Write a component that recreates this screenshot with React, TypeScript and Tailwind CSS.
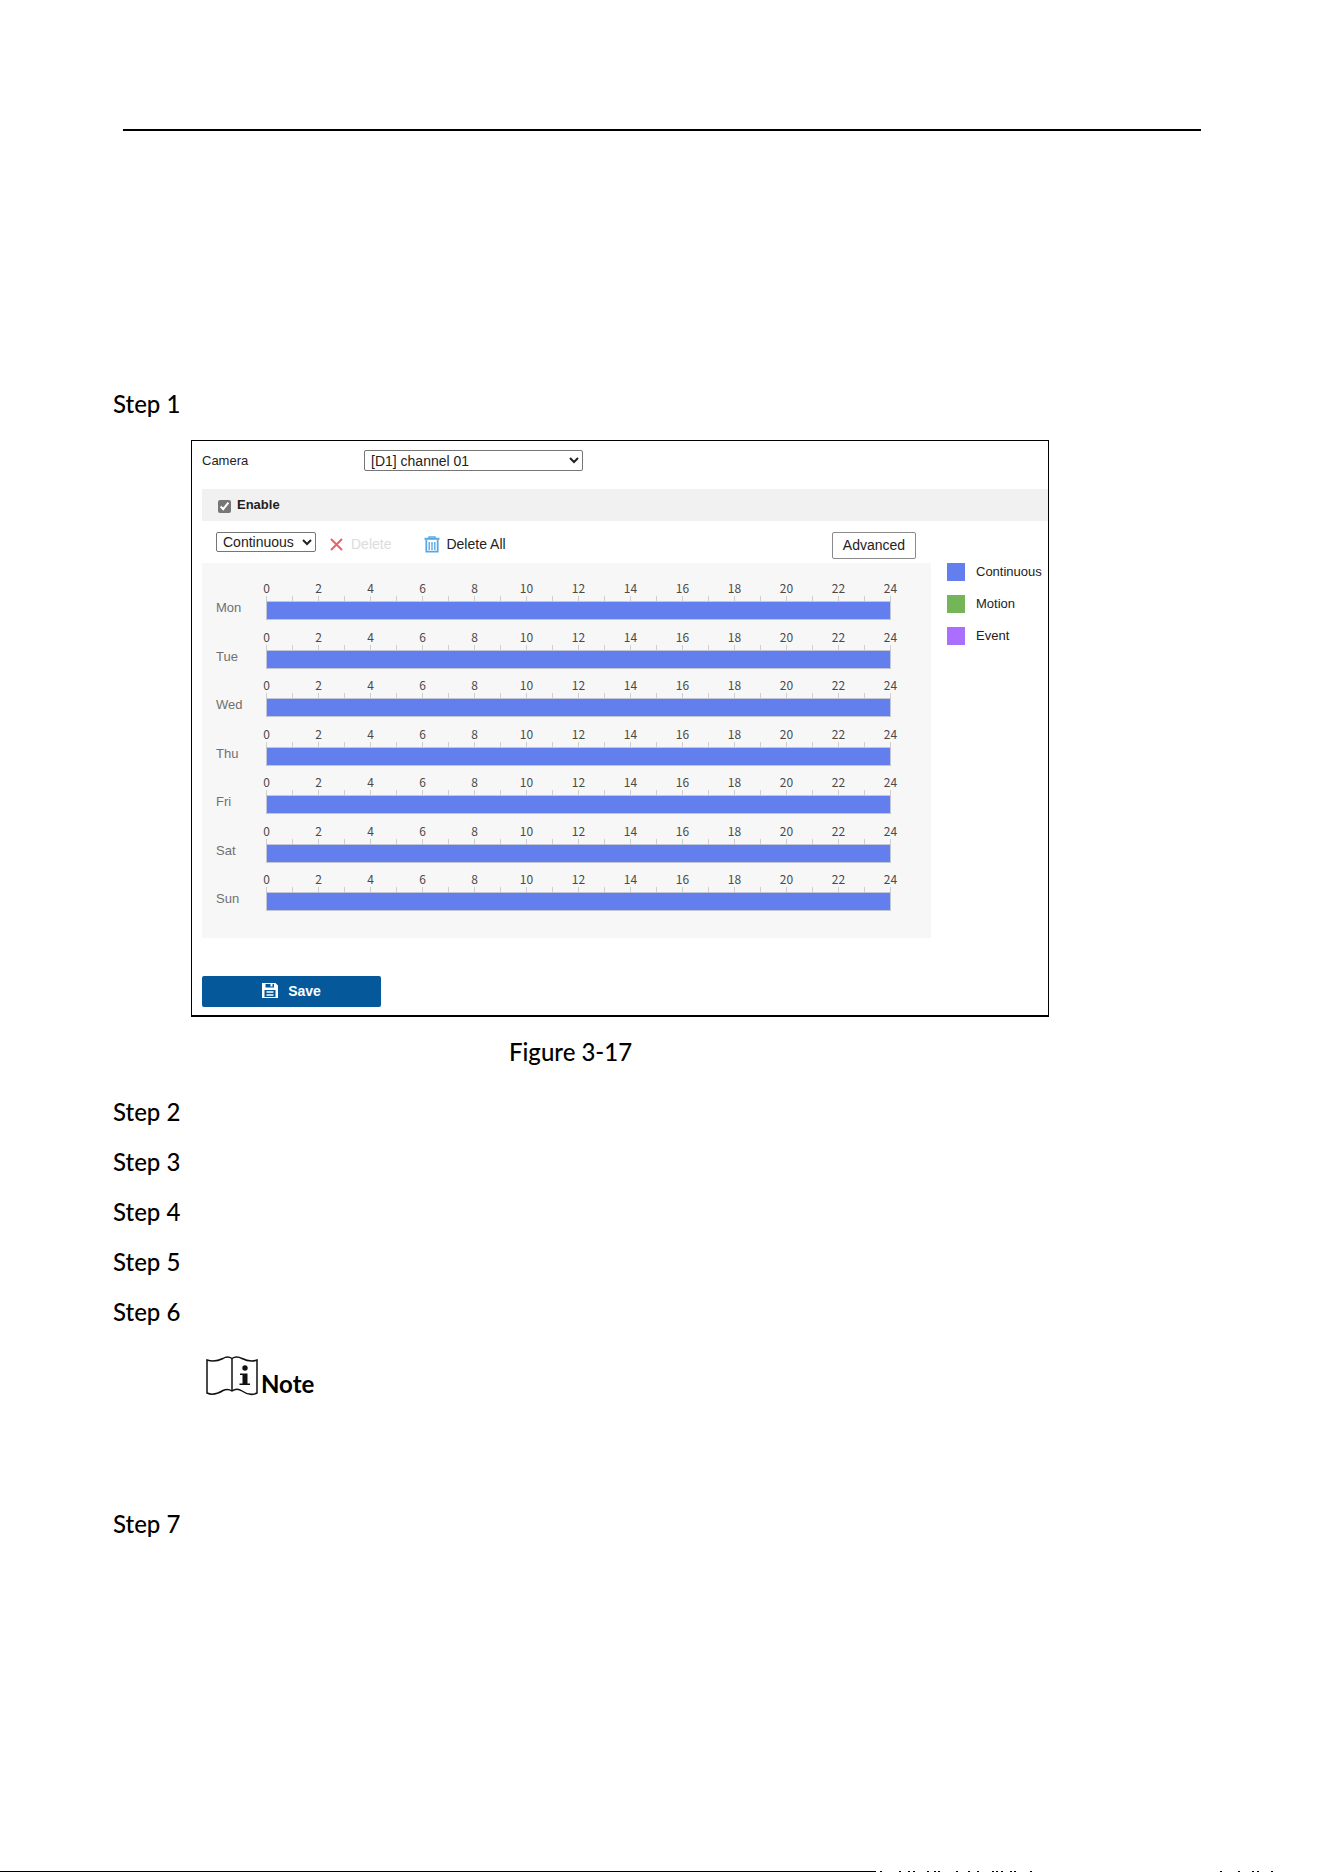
import React from "react";

const DAYS = ["Mon", "Tue", "Wed", "Thu", "Fri", "Sat", "Sun"];
const HOURS = Array.from({ length: 25 }, (_, i) => i);
const FOOTER_MARKS = [
  880, 899, 908, 913, 927, 934, 938, 956, 968, 977, 992, 996, 1001, 1010, 1014,
  1030, 1220, 1238, 1252, 1257, 1271,
];

function Step({ n }: { n: number }) {
  return <p className="text-2xl leading-8 font-medium">Step {n}</p>;
}

function DayRow({ day }: { day: string }) {
  return (
    <div className="flex">
      <span className="w-[50px] pt-[17px] text-[13px] leading-4 text-[#707070]">{day}</span>
      <div className="min-w-0 flex-1">
        <div className="flex h-[18px] justify-between font-['Noto_Sans_CJK_SC',sans-serif] text-xs leading-[10px] text-[#4a4a4a]">
          {HOURS.map((h) => (
            <div key={h} className="flex w-px flex-col items-center justify-between">
              <span className="h-[10px]">{h % 2 === 0 ? h : ""}</span>
              <span className="h-[5px] w-px bg-[#cfcfcf]" />
            </div>
          ))}
        </div>
        <div className="h-[19px] border border-[#c3c6d4] bg-[#637eed]" />
      </div>
    </div>
  );
}

function LegendItem({ color, label }: { color: string; label: string }) {
  return (
    <li className="flex items-center gap-[11px]">
      <span className={`size-[18px] ${color}`} />
      {label}
    </li>
  );
}

function RecordSchedule() {
  return (
    <form
      onSubmit={(e) => e.preventDefault()}
      className="border border-b-2 border-black pt-[9px] pb-2 pl-2.5 font-['Liberation_Sans',Arial,sans-serif] text-sm text-[#222]"
    >
      <div className="flex items-center">
        <label htmlFor="camera" className="w-[162px] pt-0.5 text-[13px]">
          Camera
        </label>
        <select
          id="camera"
          className="h-[21px] w-[219px] rounded-xs border border-[#767676] bg-white pl-0.5 text-sm leading-4"
        >
          <option>[D1] channel 01</option>
        </select>
      </div>

      <div className="mt-[18px] flex h-8 items-center gap-1.5 bg-[#f1f1f1] pl-4 text-[13px] font-bold">
        <input id="enable" type="checkbox" defaultChecked className="mt-0.5 size-[13px] accent-[#767676]" />
        <label htmlFor="enable">Enable</label>
      </div>

      <div className="flex">
        <div className="min-w-0 flex-1">
          <div className="flex h-[42px] items-start pt-[11px] pr-[15px] pl-3.5">
            <select
              aria-label="Recording type"
              className="h-5 w-[100px] rounded-xs border border-[#767676] bg-white pl-0.5 text-sm leading-4"
            >
              <option>Continuous</option>
              <option>Motion</option>
              <option>Event</option>
            </select>
            <button type="button" disabled className="mt-0.5 ml-3.5 flex items-center gap-2 text-[#dcdcdc]">
              <svg width="13" height="13" viewBox="0 0 13 13" fill="none" stroke="#ee5f68" strokeWidth="2">
                <path d="M1 1 L12 12 M12 1 L1 12" />
              </svg>
              Delete
            </button>
            <button type="button" className="mt-0.5 ml-[33px] flex items-center gap-1.5">
              <svg width="16" height="17" viewBox="0 0 16 17" fill="none" stroke="#58a9e3">
                <path d="M0.5 2.8 H15.5" strokeWidth="2" />
                <path d="M5 2 V1 H11 V2" strokeWidth="1.4" />
                <path d="M2.3 4 V15.7 H13.7 V4" strokeWidth="1.8" />
                <path d="M5.2 6 V14 M10.8 6 V14 M8 6 V14" strokeWidth="1.4" />
              </svg>
              Delete All
            </button>
            <button
              type="button"
              className="ml-auto h-[27px] w-[84px] rounded-xs border border-[#8a8a8a] bg-white pb-0.5"
            >
              Advanced
            </button>
          </div>
          <div className="bg-[#f7f7f7] pt-5 pr-10 pb-[15px] pl-3.5">
            <div className="grid h-[340px] grid-rows-7">
              {DAYS.map((d) => (
                <DayRow key={d} day={d} />
              ))}
            </div>
          </div>
        </div>
        <ul className="mt-[42px] ml-4 flex w-[101px] flex-col gap-3.5 text-[13px] leading-[18px]">
          <LegendItem color="bg-[#637eed]" label="Continuous" />
          <LegendItem color="bg-[#73b558]" label="Motion" />
          <LegendItem color="bg-[#ab6fff]" label="Event" />
        </ul>
      </div>

      <button
        type="submit"
        className="mt-[38px] flex h-[31px] w-[179px] items-center justify-center gap-2.5 rounded-xs bg-[#05599b] pb-0.5 font-bold text-white"
      >
        <svg width="16" height="15" viewBox="0 0 16 15" fill="none">
          <path fillRule="evenodd" fill="#fff" d="M0 0 H13.5 L16 2.5 V15 H0 Z M3.5 1 V4.5 H12 V1 H10.5 V3.5 H8.5 V1 Z M2.5 7 V14 H13.5 V7 Z" />
          <path d="M4.5 9 H11.5 M4.5 12 H11.5" stroke="#fff" strokeWidth="1.3" />
        </svg>
        Save
      </button>
    </form>
  );
}

function NoteIcon() {
  return (
    <svg width="52" height="40" viewBox="0 0 52 40" fill="none" stroke="#111" strokeWidth="1.5">
      <path d="M1 4 V37 C7 40 13 37 17 34.5 C20 33 23 33 26 35 C29 33 33 33 36 35 C41 38.5 46 39.5 51 37 V4 C46 6 41 5 36 2.5 C32 0.5 29 0.5 26 2.5 C23 0.5 20 0.5 17 2.5 C12 5 7 6 1 4 Z" />
      <path d="M26 2.5 V35" />
      <circle cx="39" cy="12" r="2.7" fill="#111" stroke="none" />
      <path d="M34 17.5 H41.5 V27.5 H44 V29 H33.5 V27.5 H36.5 V19 H34 Z" fill="#111" stroke="none" />
    </svg>
  );
}

export default function App() {
  return (
    <main className="flex min-h-screen flex-col bg-white font-['Lato',Calibri,sans-serif] text-black">
      <hr className="mx-[123px] mt-[129px] border-t-2 border-black" />
      <div className="mt-[257px] pr-[114px] pl-[113px]">
        <Step n={1} />
        <figure className="mt-5 ml-[78px] max-w-[858px]">
          <RecordSchedule />
          <figcaption className="mt-[19px] pl-[318px] text-2xl leading-8 font-medium">Figure 3-17</figcaption>
        </figure>
        <div className="mt-7 flex flex-col gap-[18px]">
          {[2, 3, 4, 5, 6].map((n) => (
            <Step key={n} n={n} />
          ))}
        </div>
        <div className="mt-7 ml-[93px] flex items-end gap-[3px]">
          <NoteIcon />
          <strong className="text-2xl leading-6 font-bold">Note</strong>
        </div>
        <div className="mt-28">
          <Step n={7} />
        </div>
      </div>
      <footer className="mt-auto flex">
        <svg className="h-px w-full" viewBox="0 0 1324 1" preserveAspectRatio="none" shapeRendering="crispEdges">
          <rect width="876" height="1" />
          {FOOTER_MARKS.map((x) => (
            <rect key={x} x={x} width="2" height="1" />
          ))}
        </svg>
      </footer>
    </main>
  );
}
